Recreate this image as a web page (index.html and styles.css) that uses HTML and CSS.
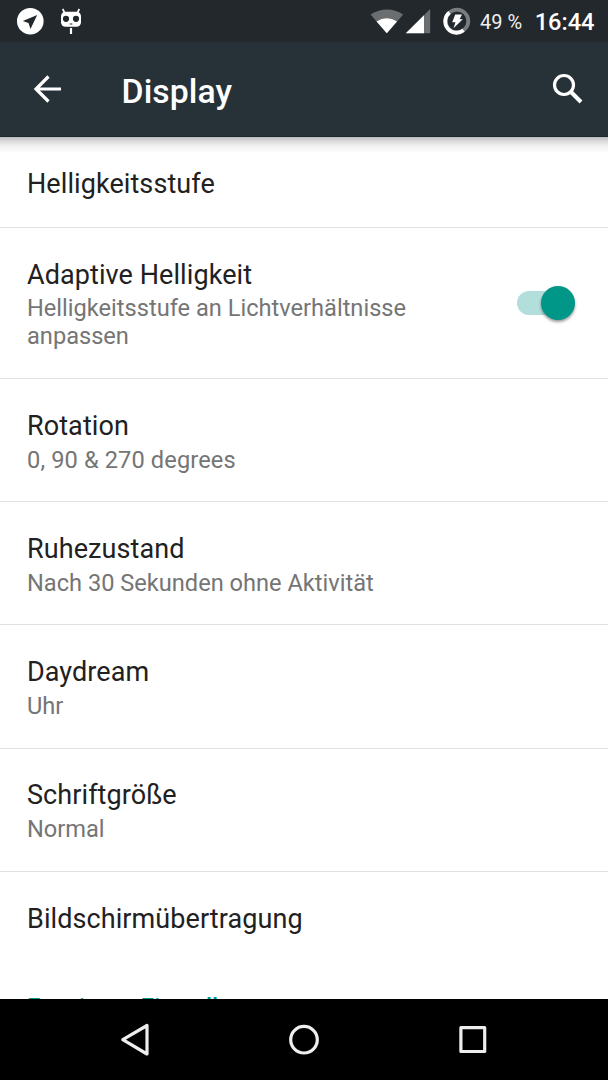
FILE: index.html
```html
<!DOCTYPE html>
<html lang="de">
<head>
<meta charset="utf-8">
<title>Display</title>
<link rel="stylesheet" href="styles.css">
</head>
<body>
<div class="screen">
  <div class="status">
    <svg class="status-left" width="100" height="42" viewBox="0 0 100 42">
      <circle cx="30.300" cy="21.200" r="13.300" fill="#fff"/>
      <path d="M37.200 15 22.800 21.100 28.500 22.900 30.500 29z" fill="#22282b"/>
      <path d="M62.700 9l2 4M79.300 9l-2 4" stroke="#fff" stroke-width="1.700"/>
      <rect x="61" y="11.800" width="20" height="15" rx="4.500" fill="#fff"/>
      <circle cx="66" cy="18.800" r="3.100" fill="#22282b"/><circle cx="76" cy="18.800" r="3.100" fill="#22282b"/>
      <path d="M69.700 24h2.600" stroke="#22282b" stroke-width="1"/>
      <path d="M71 28v6" stroke="#fff" stroke-width="2.200"/>
    </svg>
    <svg class="status-right" width="110" height="42" viewBox="365 0 110 42">
      <path d="M370.500 14.500Q387 4.500 403.200 14.500L386.800 33.300z" fill="#6a6e70"/>
      <path d="M376.600 21.400Q386.800 15.200 397 21.400L386.800 33.300z" fill="#fff"/>
      <path d="M430.200 9v24.300h-24.400z" fill="#6a6e70"/>
      <path d="M424 15.300v18h-18.200z" fill="#fff"/>
      <circle cx="457" cy="21" r="11.300" fill="none" stroke="#7a7d7f" stroke-width="3.800"/>
      <path d="M449.500 12.500A11.300 11.300 0 1 0 463.500 30.300" fill="none" stroke="#fff" stroke-width="3.800"/>
      <path d="M455.200 14.500h6.800l-2.400 4.700h3.200l-9.300 9 2-5.900h-3.300z" fill="#fff"/>
    </svg>
    <span class="battery">49 %</span>
    <span class="clock">16:44</span>
  </div>
  <header class="bar">
    <svg class="back" width="30" height="30" viewBox="0 0 30 30"><path d="M15.500 2.500 3 15l12.500 12.500M3 15h25" fill="none" stroke="#fff" stroke-width="3.200"/></svg>
    <h1>Display</h1>
    <svg class="search" width="32" height="32" viewBox="0 0 32 32"><circle cx="12" cy="12" r="9.500" fill="none" stroke="#fff" stroke-width="3.200"/><path d="M19 19l10 10" stroke="#fff" stroke-width="4"/></svg>
  </header>
  <main class="list">
    <div class="row single"><div class="title">Helligkeitsstufe</div></div>
    <div class="row tall">
      <div class="text"><div class="title">Adaptive Helligkeit</div><div class="summary">Helligkeitsstufe an Lichtverhältnisse anpassen</div></div>
      <div class="switch"><div class="thumb"></div></div>
    </div>
    <div class="row"><div class="text"><div class="title">Rotation</div><div class="summary degrees">0, 90 &amp; 270 degrees</div></div></div>
    <div class="row"><div class="text"><div class="title">Ruhezustand</div><div class="summary">Nach 30 Sekunden ohne Aktivität</div></div></div>
    <div class="row daydream"><div class="text"><div class="title">Daydream</div><div class="summary">Uhr</div></div></div>
    <div class="row fontsize"><div class="text"><div class="title">Schriftgröße</div><div class="summary">Normal</div></div></div>
    <div class="row last"><div class="title">Bildschirmübertragung</div></div>
    <div class="category">Erweiterte Einstellungen</div>
  </main>
  <nav class="nav">
    <svg width="608" height="81" viewBox="0 0 608 81" fill="none" stroke="#eee" stroke-width="3.200" stroke-linejoin="round">
      <path d="M147 26.500v28.500L122.800 40.700z"/>
      <circle cx="304" cy="40.700" r="13.300"/>
      <rect x="460.900" y="28.700" width="23.800" height="23.800"/>
    </svg>
  </nav>
</div>
</body>
</html>
```
FILE: styles.css
```css
* { box-sizing: border-box; }
body { margin: 0; font-family: Roboto, "Noto Sans", sans-serif; background: #fff; }
.screen { width: 608px; height: 1080px; display: flex; flex-direction: column; overflow: hidden; }
.status { height: 42px; flex: none; display: flex; align-items: center; background: #22282b; color: #fff; }
.status-right { margin-left: 265px; flex: none; }
.battery { margin-left: 5px; font-size: 20px; line-height: 42px; white-space: nowrap; color: #f0f0f0; padding-top: 2px; }
.clock { margin-left: auto; padding: 2px 13.5px 0 0; font-size: 23.6px; font-weight: 500; line-height: 42px; }
.bar { height: 95px; flex: none; display: flex; align-items: center; background: #263238; color: #fff; border-bottom: 1px solid #1d262b; }
.back { margin: 0 0 0 33px; }
h1 { margin: 6px 0 0 58.5px; font-size: 33.75px; line-height: 40px; font-weight: 500; letter-spacing: .1px; }
.search { margin: 0 24.5px 0 auto; }
.list { flex: 1; min-height: 0; overflow: hidden; background: linear-gradient(#bdbdbd, #dadada 4px, #f0f0f0 9px, #fff 16px); }
.row { height: 123px; padding: 31px 27px 0; display: flex; border-bottom: 1px solid #e0e0e0; }
.single { height: 91px; padding-top: 30.5px; }
.tall { height: 151px; padding-right: 33px; justify-content: space-between; }
.daydream { height: 124px; }
.fontsize { padding-top: 30px; }
.last { height: 122px; border-bottom: 0; }
.title { font-size: 27px; line-height: 32px; color: #212121; white-space: nowrap; letter-spacing: .08px; }
.summary { margin-top: 4px; font-size: 23.625px; line-height: 28px; color: #757575; }
.tall .summary { margin-top: 3px; }
.degrees { letter-spacing: .12px; }
.tall .text { width: 430px; flex: none; }
.switch { display: flex; width: 58px; height: 24px; margin-top: 32px; border-radius: 12px; background: #b2dfdb; }
.thumb { flex: none; width: 34px; height: 34px; margin: -5px 0 0 24px; border-radius: 50%; background: #009688; box-shadow: 0 2px 3px rgba(0,0,0,.4); }
.category { margin-top: -1px; padding-left: 27px; font-size: 23.625px; line-height: 28px; font-weight: 500; color: #009688; }
.nav { height: 81px; flex: none; background: #000; }
.nav svg { display: block; }
```
